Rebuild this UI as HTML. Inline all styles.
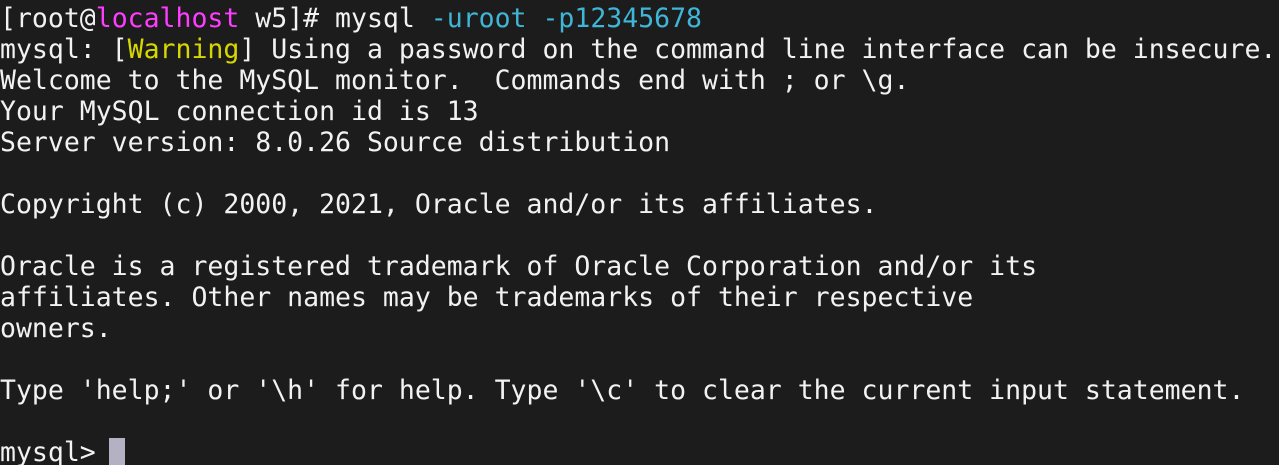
<!DOCTYPE html>
<html><head><meta charset="utf-8"><style>
html,body{margin:0;padding:0;background:#1c1c1c;width:1279px;height:465px;overflow:hidden}
pre{margin:0;padding:3px 0 0 0;font-family:"DejaVu Sans Mono","Liberation Mono",monospace;font-size:26.5px;line-height:31px;color:#f2f2f2;white-space:pre}
.m{color:#ff3cff}.y{color:#d7d700}.c{color:#3fb6d8}
.cur{display:inline-block;width:16px;height:29px;background:#b4b2c2;vertical-align:top;margin-top:1px;margin-left:-3px}
</style></head><body><pre>[root@<span class="m">localhost</span> w5]# mysql <span class="c">-uroot -p12345678</span>
mysql: [<span class="y">Warning</span>] Using a password on the command line interface can be insecure.
Welcome to the MySQL monitor.  Commands end with ; or \g.
Your MySQL connection id is 13
Server version: 8.0.26 Source distribution

Copyright (c) 2000, 2021, Oracle and/or its affiliates.

Oracle is a registered trademark of Oracle Corporation and/or its
affiliates. Other names may be trademarks of their respective
owners.

Type 'help;' or '\h' for help. Type '\c' to clear the current input statement.

mysql&gt; <span class="cur"></span></pre></body></html>
